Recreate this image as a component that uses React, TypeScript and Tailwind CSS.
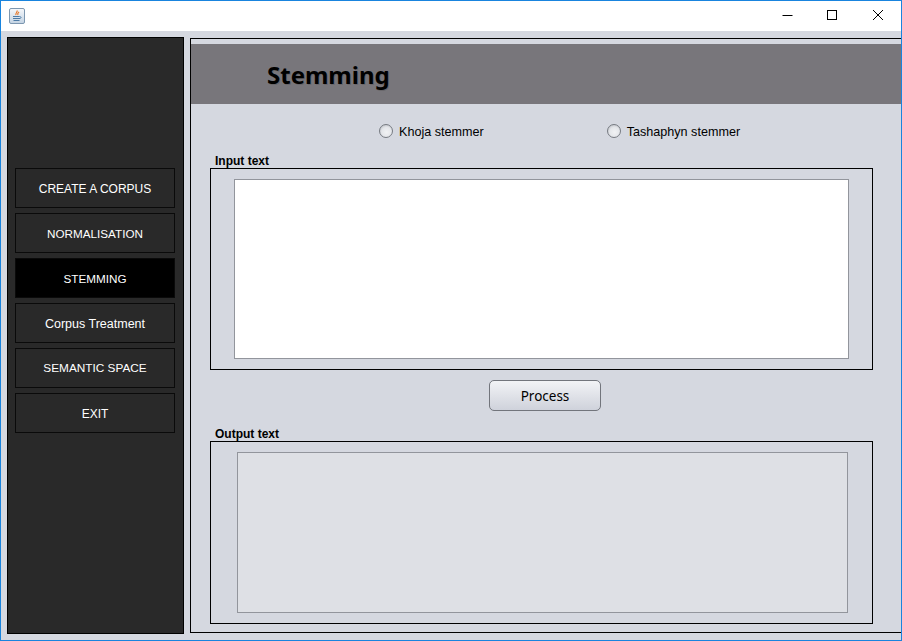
function JavaIcon() {
  return (
    <svg width="16" height="16" viewBox="0 0 16 16" className="block">
      <defs>
        <linearGradient id="g" x1="0" y1="0" x2="0" y2="1">
          <stop offset="0" stopColor="#f6f8fb" />
          <stop offset="1" stopColor="#c3d3e3" />
        </linearGradient>
      </defs>
      <rect x="0.5" y="0.5" width="15" height="15" rx="1.5" fill="url(#g)" stroke="#7d97b0" />
      <path d="M8 2.5c1 1.5-2 2.5-1 4.5M10 4c-1 1-2 1.500-1 3" fill="none" stroke="#e8792a" strokeWidth="1.2" />
      <path d="M4 8.500h6.500M4 10.500h7M4.500 12.500h6M10.500 8.500c2 0 2 2 0 2" fill="none" stroke="#4d7ba6" strokeWidth="1" />
    </svg>
  );
}

function NavButton({ label, active, size }: { label: string; active?: boolean; size?: string }) {
  return (
    <div
      className={`h-10 flex items-center justify-center border border-[#0a0a0a] text-white ${size ?? "text-[12px] pt-[1px]"} ${
        active ? "bg-black" : "bg-[#292929]"
      }`}
    >
      {label}
    </div>
  );
}

function Radio({ label }: { label: string }) {
  return (
    <div className="flex items-center gap-[6px] text-[12.6px] text-black">
      <span className="w-[14px] h-[14px] rounded-full border border-[#777b82] bg-[radial-gradient(circle_at_55%_60%,#f1f2f4_0%,#e4e6ea_50%,#aeb1b8_100%)]" />
      <span className="pt-[2px]">{label}</span>
    </div>
  );
}

export default function App() {
  return (
    <div
      className="w-[902px] h-[641px] overflow-hidden flex flex-col border border-[#1984de] bg-[#d5d8e0]"
      style={{ fontFamily: '"Liberation Sans", Arial, sans-serif' }}
    >
      <div className="h-[30px] shrink-0 bg-white flex items-center justify-between pl-[8px]">
        <JavaIcon />
        <div className="flex items-center text-black">
          <svg width="46" height="30" viewBox="0 0 46 30" className="block">
            <path d="M 19.500 14.500 H 29.500" stroke="#000" fill="none" />
          </svg>
          <svg width="46" height="30" viewBox="0 0 46 30" className="block">
            <rect x="18.500" y="9.500" width="9" height="9" stroke="#000" fill="none" />
          </svg>
          <svg width="46" height="30" viewBox="0 0 46 30" className="block">
            <path d="M 18 9 L 28 19 M 28 9 L 18 19" stroke="#000" fill="none" />
          </svg>
        </div>
      </div>

      <div className="flex-1 min-h-0 flex pl-[6px] pt-[6px] pb-[6px] gap-[6px]">
        <aside className="w-[177px] shrink-0 h-[597px] border border-black bg-[#292929] pl-[7px] pr-[8px] pt-[130px] flex flex-col gap-[5px]">
          <NavButton label="CREATE A CORPUS" />
          <NavButton label="NORMALISATION" size="text-[11.7px] pt-[1px]" />
          <NavButton label="STEMMING" active size="text-[11.7px] pt-[1px]" />
          <NavButton label="Corpus Treatment" size="text-[12.5px] pt-[2px]" />
          <NavButton label="SEMANTIC SPACE" size="text-[11.8px] pt-[2px]" />
          <NavButton label="EXIT" />
        </aside>

        <main className="flex-1 mt-[1px] h-[595px] border-t border-l border-b border-black pt-[5px] flex flex-col">
          <header className="h-[60px] shrink-0 bg-[#78767b] pl-[76px] pt-[1px] flex items-center">
            <h1
              className="text-[24px] font-bold text-black"
              style={{ fontFamily: '"Noto Sans", sans-serif', textShadow: "1px 1px 0 rgba(0,0,0,0.15)" }}
            >
              Stemming
            </h1>
          </header>

          <div className="h-[54px] shrink-0 pl-[188px] flex items-center gap-[123px]">
            <Radio label="Khoja stemmer" />
            <Radio label="Tashaphyn stemmer" />
          </div>

          <div className="pl-[19px] w-[682px]">
            <div className="h-[10px] -mt-[2px] mb-[2px] pl-[5px] text-[12px] leading-[10px] font-bold text-black">Input text</div>
            <div className="h-[202px] border border-black px-[23px] py-[10px]">
              <div className="h-full bg-white border border-[#92959c]" />
            </div>

            <div className="h-[41px] pl-[279px] pt-[10px]">
              <button
                className="block w-[112px] h-[31px] pt-[1px] rounded-[5px] border border-[#72757c] bg-gradient-to-b from-[#f2f3f6] to-[#cfd2db] text-[13.5px] text-black"
                style={{ fontFamily: '"Noto Sans", sans-serif' }}
              >
                Process
              </button>
            </div>

            <div className="h-[30px] pt-[17px] pl-[5px] text-[12px] leading-[13px] font-bold text-black">Output text</div>
            <div className="h-[183px] border border-black pl-[26px] pr-[24px] py-[10px]">
              <div className="h-full bg-[#dee0e5] border border-[#92959c]" />
            </div>
          </div>
        </main>
      </div>
    </div>
  );
}
